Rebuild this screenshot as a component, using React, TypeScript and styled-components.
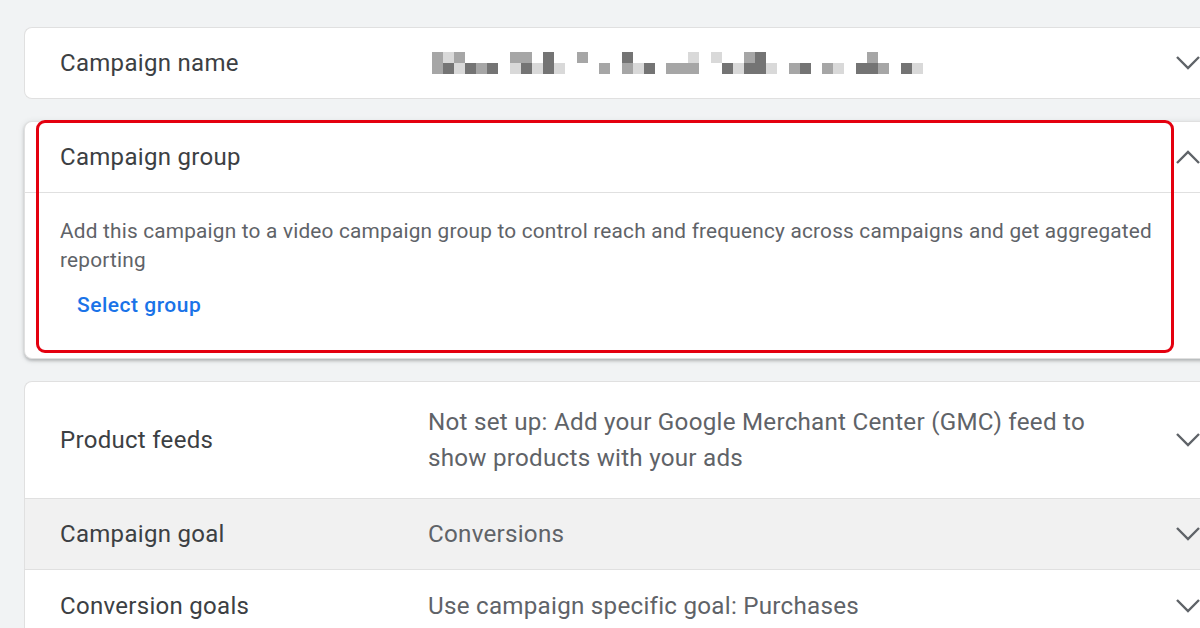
import React from 'react';
import styled, { createGlobalStyle } from 'styled-components';

const GlobalStyle = createGlobalStyle`
  html, body {
    margin: 0;
    padding: 0;
    background: #f1f3f4;
  }
  body {
    width: 1200px;
    height: 628px;
    overflow: hidden;
    font-family: Roboto, 'Noto Sans', Arial, sans-serif;
    -webkit-font-smoothing: antialiased;
  }
`;

// pixelated placeholder for the hidden campaign name
const mosaicWords: number[][][] = [
  [[2, 2], [1, 3], [2, 1], [0, 3], [0, 2], [0, 3]],
  [[2, 1], [2, 3], [0, 1], [3, 3], [0, 1]],
  [[2, 0], [0, 0], [0, 2]],
  [[3, 2], [0, 1], [0, 3], [0, 0], [0, 2], [0, 2], [1, 2]],
  [[1, 0], [0, 3], [0, 1], [2, 3], [3, 3], [0, 1]],
  [[0, 2], [0, 3], [0, 0], [0, 2], [0, 1]],
  [[0, 3], [2, 3], [0, 2]],
  [[0, 3], [0, 1]],
];

const shades = ['transparent', '#d9d9d9', '#a6a6a6', '#747474'];

const Page = styled.div`
  padding: 27px 0 0 24px;
  display: flex;
  flex-direction: column;
  gap: 22px;
`;

const Card = styled.section<{ $raised?: boolean }>`
  position: relative;
  width: 1188px;
  background: #fff;
  border: 1px solid #e0e0e0;
  border-right: none;
  border-radius: 8px 0 0 8px;
  box-sizing: border-box;
  box-shadow: ${(p) =>
    p.$raised ? '0 2px 3px rgba(60, 64, 67, 0.28), 0 1px 6px rgba(60, 64, 67, 0.12)' : 'none'};
`;

const Row = styled.div<{ $height: number; $muted?: boolean }>`
  display: grid;
  grid-template-columns: 368px 1fr 48px;
  align-items: center;
  height: ${(p) => p.$height}px;
  padding-left: 35px;
  background: ${(p) => (p.$muted ? '#f1f1f1' : 'transparent')};
  & + & {
    border-top: 1px solid #e0e0e0;
  }
  &:first-child {
    border-radius: 8px 0 0 0;
  }
`;

const Label = styled.div`
  font-size: 24px;
  color: #3c4043;
  letter-spacing: 0.3px;
`;

const Value = styled.div`
  font-size: 24.2px;
  line-height: 36px;
  color: #5f6368;
  letter-spacing: 0.25px;
  padding-right: 20px;
`;

const ChevronBox = styled.div`
  display: flex;
  justify-content: center;
  align-items: center;
  width: 48px;
`;

const Header = styled.div`
  display: flex;
  align-items: center;
  justify-content: space-between;
  height: 70px;
  padding-left: 35px;
  border-bottom: 1px solid #e0e0e0;
`;

const Body = styled.div`
  padding: 24px 48px 35px 35px;
`;

const Description = styled.p`
  margin: 0;
  font-size: 20.8px;
  line-height: 29px;
  color: #5f6368;
  letter-spacing: 0.2px;
`;

const LinkButton = styled.button`
  margin-top: 12px;
  height: 36px;
  padding: 0 17px;
  border: none;
  background: none;
  font-family: inherit;
  font-size: 21px;
  font-weight: 500;
  color: #1a73e8;
  letter-spacing: 0.5px;
  cursor: pointer;
`;

const Highlight = styled.div`
  position: absolute;
  left: 11px;
  top: -2px;
  width: 1138px;
  height: 233px;
  border: 3px solid #e4000f;
  border-radius: 9px;
  box-sizing: border-box;
  pointer-events: none;
`;

const Mosaic = styled.div`
  display: flex;
  gap: 12px;
  margin-left: 4px;
  height: 22px;
`;

const Word = styled.div`
  display: flex;
`;

const Cell = styled.div`
  display: flex;
  flex-direction: column;
  width: 11px;
`;

const Pixel = styled.span<{ $shade: number }>`
  width: 11px;
  height: 11px;
  background: ${(p) => shades[p.$shade]};
`;

const Chevron = ({ up }: { up?: boolean }) => (
  <svg width="26" height="16" viewBox="0 0 26 16" fill="none">
    <polyline
      points={up ? '2,14 13,3 24,14' : '2,2 13,13 24,2'}
      stroke="#5f6368"
      strokeWidth="2.4"
    />
  </svg>
);

const HiddenName = () => (
  <Mosaic>
    {mosaicWords.map((word, i) => (
      <Word key={i}>
        {word.map(([top, bottom], j) => (
          <Cell key={j}>
            <Pixel $shade={top} />
            <Pixel $shade={bottom} />
          </Cell>
        ))}
      </Word>
    ))}
  </Mosaic>
);

const App = () => {
  return (
    <>
      <GlobalStyle />
      <Page>
        <Card>
          <Row $height={70}>
            <Label>Campaign name</Label>
            <HiddenName />
            <ChevronBox>
              <Chevron />
            </ChevronBox>
          </Row>
        </Card>

        <Card $raised>
          <Header>
            <Label>Campaign group</Label>
            <ChevronBox>
              <Chevron up />
            </ChevronBox>
          </Header>
          <Body>
            <Description>
              Add this campaign to a video campaign group to control reach and frequency across
              campaigns and get aggregated reporting
            </Description>
            <LinkButton>Select group</LinkButton>
          </Body>
          <Highlight />
        </Card>

        <Card>
          <Row $height={116}>
            <Label>Product feeds</Label>
            <Value>
              Not set up: Add your Google Merchant Center (GMC) feed to show products with your ads
            </Value>
            <ChevronBox>
              <Chevron />
            </ChevronBox>
          </Row>
          <Row $height={70} $muted>
            <Label>Campaign goal</Label>
            <Value>Conversions</Value>
            <ChevronBox>
              <Chevron />
            </ChevronBox>
          </Row>
          <Row $height={71}>
            <Label>Conversion goals</Label>
            <Value>Use campaign specific goal: Purchases</Value>
            <ChevronBox>
              <Chevron />
            </ChevronBox>
          </Row>
        </Card>
      </Page>
    </>
  );
};

export default App;
